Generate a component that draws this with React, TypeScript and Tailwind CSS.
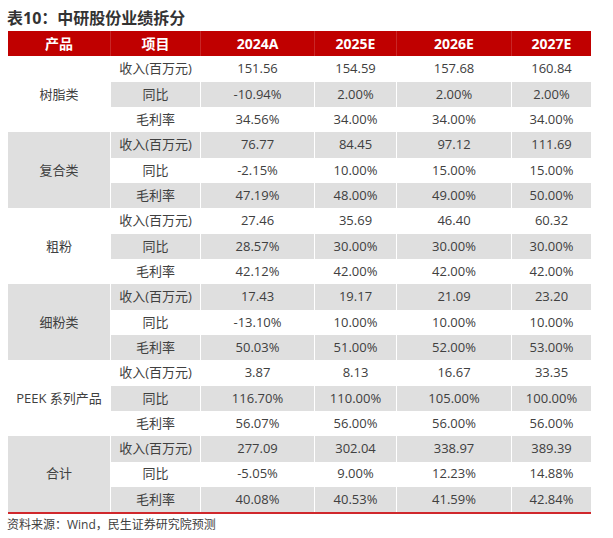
import React from 'react';

type Group = {
  name: string;
  rows: [string, string, string, string, string][];
};

const groups: Group[] = [
  {
    name: '树脂类',
    rows: [
      ['收入(百万元)', '151.56', '154.59', '157.68', '160.84'],
      ['同比', '-10.94%', '2.00%', '2.00%', '2.00%'],
      ['毛利率', '34.56%', '34.00%', '34.00%', '34.00%'],
    ],
  },
  {
    name: '复合类',
    rows: [
      ['收入(百万元)', '76.77', '84.45', '97.12', '111.69'],
      ['同比', '-2.15%', '10.00%', '15.00%', '15.00%'],
      ['毛利率', '47.19%', '48.00%', '49.00%', '50.00%'],
    ],
  },
  {
    name: '粗粉',
    rows: [
      ['收入(百万元)', '27.46', '35.69', '46.40', '60.32'],
      ['同比', '28.57%', '30.00%', '30.00%', '30.00%'],
      ['毛利率', '42.12%', '42.00%', '42.00%', '42.00%'],
    ],
  },
  {
    name: '细粉类',
    rows: [
      ['收入(百万元)', '17.43', '19.17', '21.09', '23.20'],
      ['同比', '-13.10%', '10.00%', '10.00%', '10.00%'],
      ['毛利率', '50.03%', '51.00%', '52.00%', '53.00%'],
    ],
  },
  {
    name: 'PEEK 系列产品',
    rows: [
      ['收入(百万元)', '3.87', '8.13', '16.67', '33.35'],
      ['同比', '116.70%', '110.00%', '105.00%', '100.00%'],
      ['毛利率', '56.07%', '56.00%', '56.00%', '56.00%'],
    ],
  },
  {
    name: '合计',
    rows: [
      ['收入(百万元)', '277.09', '302.04', '338.97', '389.39'],
      ['同比', '-5.05%', '9.00%', '12.23%', '14.88%'],
      ['毛利率', '40.08%', '40.53%', '41.59%', '42.84%'],
    ],
  },
];

const headers = ['产品', '项目', '2024A', '2025E', '2026E', '2027E'];

export default function App() {
  return (
    <div
      className="w-[613px] h-[538px] bg-white text-[#404040] pt-[7px]"
      style={{ fontFamily: '"Open Sans", "Noto Sans CJK SC", sans-serif' }}
    >
      <h1 className="px-[7px] text-[16px] leading-[22px] font-bold text-[#333333]">表10：中研股份业绩拆分</h1>
      <div className="mx-[8px] mt-[2px] w-[583px] grid grid-cols-[103px_90px_114px_82px_115px_79px] auto-rows-[25.33px] border-b-2 border-[#d0282c]">
        {headers.map((h, i) => (
          <div
            key={h}
            className={`h-[25px] bg-[#c00000] text-white font-bold text-[14px] flex items-center justify-center ${
              i < 5 ? 'border-r border-white/15' : ''
            }`}
          >
            {h}
          </div>
        ))}
        {groups.map((g, gi) => {
          const odd = gi % 2 === 1;
          return (
            <React.Fragment key={g.name}>
              <div
                className={`col-start-1 row-span-3 flex items-center justify-center text-[13px] border-r border-white ${
                  odd ? 'bg-[#dfdfdf]' : 'bg-white'
                }`}
              >
                {g.name}
              </div>
              {g.rows.map((r, ri) => {
                const gray = odd ? ri !== 1 : ri === 1;
                return r.map((c, ci) => (
                  <div
                    key={`${ri}-${ci}`}
                    className={`flex items-center justify-center text-[13px] ${ci < 4 ? 'border-r border-white' : ''} ${
                      gray ? 'bg-[#dfdfdf]' : 'bg-white'
                    }`}
                  >
                    {c}
                  </div>
                ));
              })}
            </React.Fragment>
          );
        })}
      </div>
      <p className="px-[7px] mt-[2px] text-[12px] leading-[18px] text-[#404040]">资料来源：Wind，民生证券研究院预测</p>
    </div>
  );
}
